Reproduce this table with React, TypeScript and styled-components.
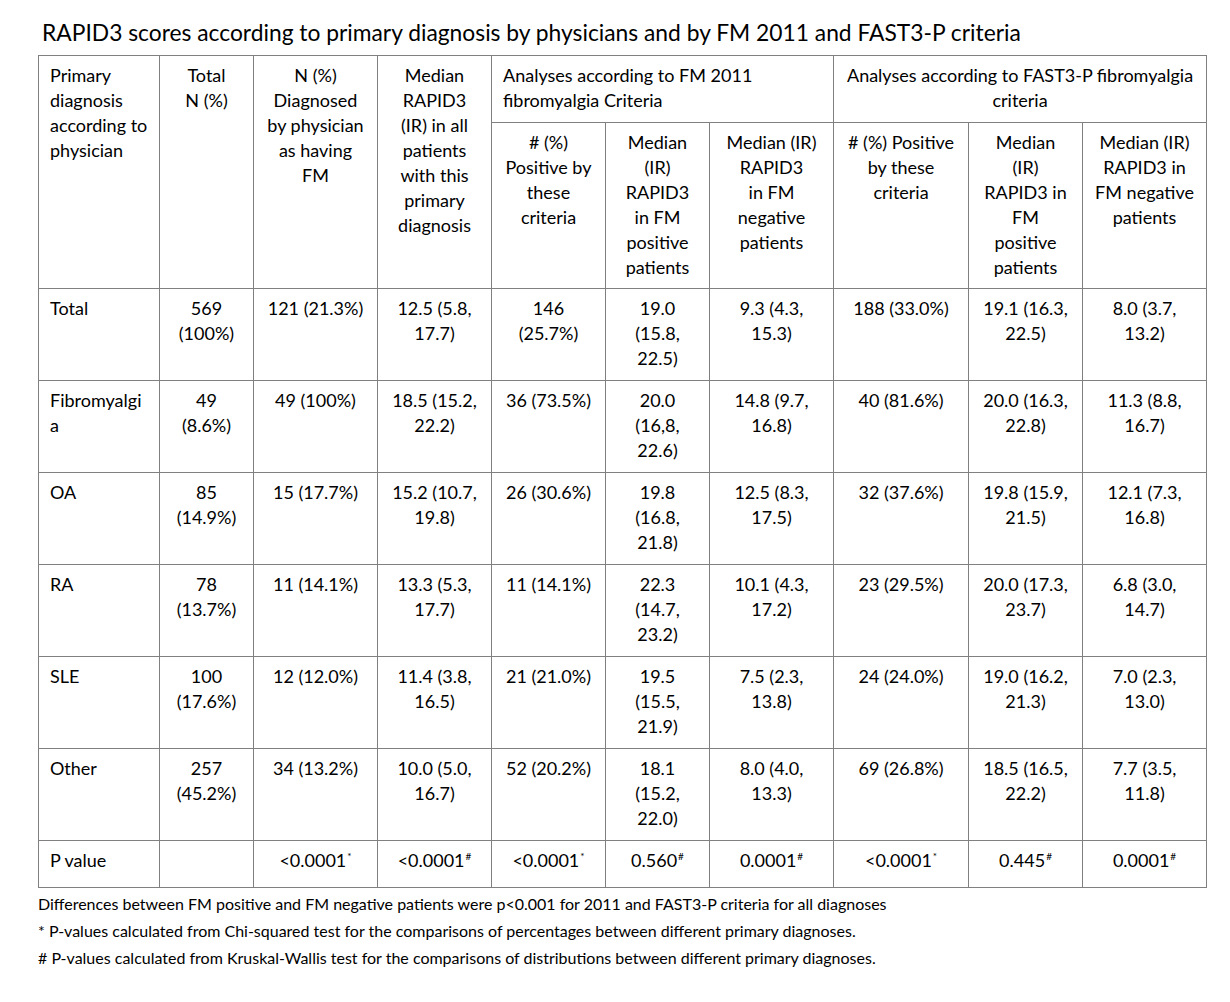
import React from "react";
import styled, { createGlobalStyle } from "styled-components";

const Global = createGlobalStyle`
  html, body { margin: 0; padding: 0; background: #ffffff; }
  body { font-family: Lato, "Open Sans", sans-serif; color: #000; }
`;

const Page = styled.div`
  padding: 18px 0 0 38px;
  width: 1192px;
`;

const Title = styled.div`
  font-size: 22.8px;
  line-height: 28px;
  margin: 0 0 9px 4px;
  white-space: nowrap;
`;

const Table = styled.table`
  border-collapse: collapse;
  table-layout: fixed;
  width: 1168px;
  font-size: 18px;
  line-height: 25px;
`;

const Cell = styled.td<{ $align?: "left" | "center" }>`
  border: 1px solid #808080;
  padding: 7px 11px 0;
  vertical-align: top;
  text-align: ${(p) => p.$align ?? "center"};
  white-space: pre;
  overflow: hidden;
`;

const HeadCell = styled(Cell).attrs({ as: "th" })`
  font-weight: normal;
`;

const Row = styled.tr<{ $h: number }>`
  height: ${(p) => p.$h}px;
`;

const Sup = styled.sup`
  font-size: 10px;
  line-height: 0;
  vertical-align: 7px;
  margin-left: 1px;
`;

const Notes = styled.div`
  margin-top: 2px;
  font-size: 16px;
  line-height: 27px;
  white-space: nowrap;
`;

type Val = string | { v: string; sup: string };

const widths = [121, 94, 124, 114, 114, 104, 124, 135, 114, 124];

const leftHeads = [
  { t: "Primary\ndiagnosis\naccording to\nphysician", a: "left" as const },
  { t: "Total\nN (%)", a: "center" as const },
  { t: "N (%)\nDiagnosed\nby physician\nas having\nFM", a: "center" as const },
  { t: "Median\nRAPID3\n(IR) in all\npatients\nwith this\nprimary\ndiagnosis", a: "center" as const },
];

const subHeads = [
  "# (%)\nPositive by\nthese\ncriteria",
  "Median\n(IR)\nRAPID3\nin FM\npositive\npatients",
  "Median (IR)\nRAPID3\nin FM\nnegative\npatients",
  "# (%) Positive\nby these\ncriteria",
  "Median\n(IR)\nRAPID3 in\nFM\npositive\npatients",
  "Median (IR)\nRAPID3 in\nFM negative\npatients",
];

const rows: { label: string; h: number; cells: Val[] }[] = [
  {
    label: "Total",
    h: 92,
    cells: ["569\n(100%)", "121 (21.3%)", "12.5 (5.8,\n17.7)", "146\n(25.7%)", "19.0\n(15.8,\n22.5)", "9.3 (4.3,\n15.3)", "188 (33.0%)", "19.1 (16.3,\n22.5)", "8.0 (3.7,\n13.2)"],
  },
  {
    label: "Fibromyalgi\na",
    h: 92,
    cells: ["49\n(8.6%)", "49 (100%)", "18.5 (15.2,\n22.2)", "36 (73.5%)", "20.0\n(16,8,\n22.6)", "14.8 (9.7,\n16.8)", "40 (81.6%)", "20.0 (16.3,\n22.8)", "11.3 (8.8,\n16.7)"],
  },
  {
    label: "OA",
    h: 92,
    cells: ["85\n(14.9%)", "15 (17.7%)", "15.2 (10.7,\n19.8)", "26 (30.6%)", "19.8\n(16.8,\n21.8)", "12.5 (8.3,\n17.5)", "32 (37.6%)", "19.8 (15.9,\n21.5)", "12.1 (7.3,\n16.8)"],
  },
  {
    label: "RA",
    h: 92,
    cells: ["78\n(13.7%)", "11 (14.1%)", "13.3 (5.3,\n17.7)", "11 (14.1%)", "22.3\n(14.7,\n23.2)", "10.1 (4.3,\n17.2)", "23 (29.5%)", "20.0 (17.3,\n23.7)", "6.8 (3.0,\n14.7)"],
  },
  {
    label: "SLE",
    h: 92,
    cells: ["100\n(17.6%)", "12 (12.0%)", "11.4 (3.8,\n16.5)", "21 (21.0%)", "19.5\n(15.5,\n21.9)", "7.5 (2.3,\n13.8)", "24 (24.0%)", "19.0 (16.2,\n21.3)", "7.0 (2.3,\n13.0)"],
  },
  {
    label: "Other",
    h: 92,
    cells: ["257\n(45.2%)", "34 (13.2%)", "10.0 (5.0,\n16.7)", "52 (20.2%)", "18.1\n(15.2,\n22.0)", "8.0 (4.0,\n13.3)", "69 (26.8%)", "18.5 (16.5,\n22.2)", "7.7 (3.5,\n11.8)"],
  },
  {
    label: "P value",
    h: 47,
    cells: [
      "",
      { v: "<0.0001", sup: "*" },
      { v: "<0.0001", sup: "#" },
      { v: "<0.0001", sup: "*" },
      { v: "0.560", sup: "#" },
      { v: "0.0001", sup: "#" },
      { v: "<0.0001", sup: "*" },
      { v: "0.445", sup: "#" },
      { v: "0.0001", sup: "#" },
    ],
  },
];

const notes = [
  "Differences between FM positive and FM negative patients were p<0.001 for 2011 and FAST3-P criteria for all diagnoses",
  "* P-values calculated from Chi-squared test for the comparisons of percentages between different primary diagnoses.",
  "# P-values calculated from Kruskal-Wallis test for the comparisons of distributions between different primary diagnoses.",
];

const renderVal = (v: Val) =>
  typeof v === "string" ? (
    v
  ) : (
    <>
      {v.v}
      <Sup>{v.sup}</Sup>
    </>
  );

export default function App() {
  return (
    <>
      <Global />
      <Page>
        <Title>
          RAPID3 scores according to primary diagnosis by physicians and by FM 2011 and FAST3-P criteria
        </Title>
        <Table>
          <colgroup>
            {widths.map((w, i) => (
              <col key={i} style={{ width: w }} />
            ))}
          </colgroup>
          <thead>
            <Row $h={67}>
              {leftHeads.map((h, i) => (
                <HeadCell key={i} rowSpan={2} $align={h.a}>
                  {h.t}
                </HeadCell>
              ))}
              <HeadCell colSpan={3} $align="left">
                {"Analyses according to FM 2011\nfibromyalgia Criteria"}
              </HeadCell>
              <HeadCell colSpan={3} $align="center">
                {"Analyses according to FAST3-P fibromyalgia\ncriteria"}
              </HeadCell>
            </Row>
            <Row $h={166}>
              {subHeads.map((t, i) => (
                <HeadCell key={i}>{t}</HeadCell>
              ))}
            </Row>
          </thead>
          <tbody>
            {rows.map((r) => (
              <Row key={r.label} $h={r.h}>
                <Cell $align="left">{r.label}</Cell>
                {r.cells.map((c, i) => (
                  <Cell key={i}>{renderVal(c)}</Cell>
                ))}
              </Row>
            ))}
          </tbody>
        </Table>
        <Notes>
          {notes.map((n) => (
            <div key={n}>{n}</div>
          ))}
        </Notes>
      </Page>
    </>
  );
}
